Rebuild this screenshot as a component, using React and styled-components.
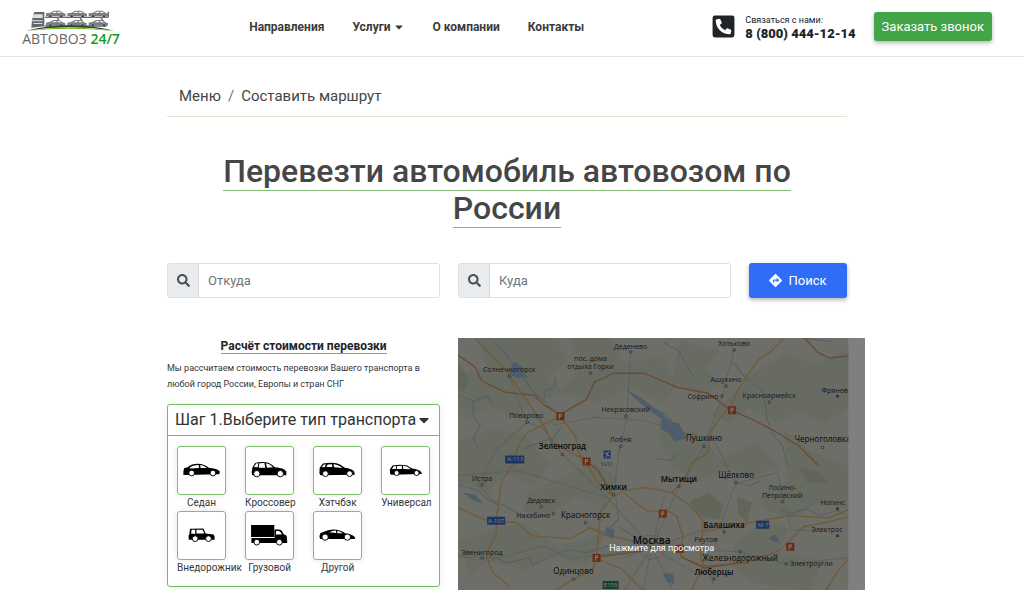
import React from 'react';
import styled, { createGlobalStyle } from 'styled-components';
import { FaCaretDown, FaDirections, FaPhoneSquareAlt, FaSearch } from 'react-icons/fa';

const GlobalStyle = createGlobalStyle`
  *,
  *::before,
  *::after {
    box-sizing: border-box;
  }

  body {
    margin: 0;
    background: #fff;
    color: #212529;
    font-family: Roboto, 'Liberation Sans', sans-serif;
    font-size: 15px;
  }

  button,
  input {
    font-family: inherit;
  }
`;

const Header = styled.header`
  display: flex;
  align-items: center;
  justify-content: space-between;
  padding: 4px 32px 7px 20px;
  border-bottom: 1px solid #e2e2e2;
`;

const Logo = styled.a`
  display: flex;
  flex-direction: column;
  align-items: center;
  width: 102px;
  padding: 3px 0 2px;
  color: #63676a;
  font-family: 'Open Sans', sans-serif;
  font-size: 14px;
  line-height: 16px;
  text-decoration: none;
  white-space: nowrap;

  b {
    color: #159a1c;
    font-weight: 600;
  }
`;

const Nav = styled.nav`
  display: flex;
  gap: 28px;
`;

const NavLink = styled.a`
  display: flex;
  align-items: center;
  gap: 2px;
  color: #3b3b3b;
  font-size: 12px;
  font-weight: 700;
  line-height: 18px;
  text-decoration: none;
`;

const Contacts = styled.div`
  display: flex;
  align-items: center;
  gap: 18px;
`;

const Phone = styled.a`
  display: flex;
  align-items: center;
  gap: 9px;
  color: #212529;
  font-size: 9px;
  line-height: 14px;
  text-decoration: none;

  strong {
    display: block;
    font-size: 13px;
    font-weight: 900;
  }
`;

const Button = styled.button`
  display: flex;
  align-items: center;
  justify-content: center;
  gap: 6px;
  padding: ${({ $wide }) => ($wide ? '8px 16px' : '5px 8px')};
  border: 0;
  border-radius: 3px;
  background: ${({ $color }) => $color};
  box-shadow: 0 2px 4px rgba(0, 0, 0, 0.3);
  color: #fff;
  font-size: 13px;
  line-height: 19px;
  white-space: nowrap;
  cursor: pointer;
`;

const Page = styled.main`
  max-width: 710px;
  margin: 0 auto;
  padding: 20px 20px 0 10px;
`;

const Breadcrumb = styled.nav`
  display: flex;
  gap: 7px;
  padding: 9px 12px;
  border-bottom: 1px solid #dfe6d0;
  color: #6c757d;
  font-size: 15px;
  line-height: 21px;

  a {
    color: #454545;
    text-decoration: none;
  }
`;

const Title = styled.h1`
  margin: 36px 0 0;
  color: #464646;
  font-size: 32px;
  font-weight: 500;
  line-height: 37px;
  text-align: center;

  span {
    border-bottom: 1px solid #86ba78;
  }
`;

const Search = styled.form`
  display: grid;
  grid-template-columns: 273fr 273fr 98fr;
  gap: 18px;
  margin-top: 36px;
`;

const Field = styled.label`
  display: flex;
  height: 35px;
  border: 1px solid #dcdfe3;
  border-radius: 3px;
  overflow: hidden;
`;

const FieldIcon = styled.span`
  display: flex;
  flex: none;
  align-items: center;
  justify-content: center;
  width: 31px;
  border-right: 1px solid #d5d9de;
  background: #e9ecef;
  color: #495057;
  font-size: 13px;
`;

const Input = styled.input`
  flex: 1;
  min-width: 0;
  padding: 0 9px;
  border: 0;
  color: #495057;
  font-size: 13px;

  &::placeholder {
    color: #6c757d;
  }
`;

const Columns = styled.div`
  display: grid;
  grid-template-columns: 273fr 407fr;
  gap: 18px;
  margin: 40px -18px 0 0;
`;

const Calculator = styled.section`
  padding-bottom: 4px;
`;

const Subtitle = styled.h2`
  margin: 0 0 6px;
  font-size: 12px;
  font-weight: 700;
  line-height: 16px;
  text-align: center;

  span {
    border-bottom: 1px solid #6cb355;
  }
`;

const Description = styled.p`
  margin: 0 0 12px;
  color: #33373b;
  font-size: 9px;
  line-height: 16px;
`;

const Step = styled.div`
  border: 1px solid #74bb64;
  border-radius: 3px;
  box-shadow: 0 0 8px rgba(0, 0, 0, 0.08);
`;

const StepHeader = styled.button`
  display: flex;
  align-items: center;
  justify-content: space-between;
  width: 100%;
  padding: 5px 7px;
  border: 0;
  border-bottom: 1px solid #74bb64;
  background: none;
  color: #2f3337;
  font-size: 16px;
  line-height: 20px;
  white-space: nowrap;
`;

const Vehicles = styled.div`
  display: grid;
  grid-template-columns: repeat(4, 49px);
  justify-content: space-between;
  padding: 10px 9px;
`;

const Vehicle = styled.button`
  width: 49px;
  padding: 0;
  border: 0;
  background: none;
  color: #33373b;
  font-size: 10px;
  line-height: 16px;
  cursor: pointer;
`;

const VehicleBox = styled.span`
  display: block;
  height: 49px;
  border: 1px solid #80bf70;
  border-radius: 3px;
  box-shadow: 0 0 6px rgba(0, 0, 0, 0.1);

  svg {
    display: block;
    width: 100%;
    height: 100%;
  }
`;

const VehicleName = styled.span`
  display: block;
  text-align: center;
  white-space: nowrap;
`;

const MapPanel = styled.div`
  display: grid;
  position: relative;
  overflow: hidden;

  svg {
    width: 100%;
    height: 100%;
  }
`;

const MapOverlay = styled.button`
  position: absolute;
  inset: 0;
  padding: 166px 0 0;
  border: 0;
  background: rgba(0, 0, 0, 0.5);
  color: #fff;
  font-size: 9px;
  cursor: pointer;
`;

const Wheels = ({ left, right, y, r = 9 }) => (
  <g fill="#fff" stroke="#000" strokeWidth="3">
    <circle cx={left} cy={y} r={r} />
    <circle cx={right} cy={y} r={r} />
  </g>
);

const vehicles = [
  {
    name: 'Седан',
    body: 'M17 76L19 66L30 63Q43 52 62 52Q82 52 97 64Q120 66 128 73L132 76L130 85L17 87Z',
    glass: 'M37 64Q46 56 65 56L66 65L38 67ZM70 56Q80 56 91 65L71 65Z',
    wheels: { left: 43, right: 110, y: 81 },
  },
  {
    name: 'Кроссовер',
    body: 'M18 78L20 64L28 50Q38 45 63 47Q76 48 91 63Q119 64 127 76V88L19 88Z',
    glass: 'M25 62L32 51L39 50L37 63ZM42 50L58 49L61 64L40 64ZM63 50Q75 51 85 63L66 64Z',
    wheels: { left: 34, right: 108, y: 83, r: 10 },
  },
  {
    name: 'Хэтчбэк',
    body: 'M17 82L18 64L28 51Q54 46 71 50Q83 53 97 64Q118 66 126 75L129 86L20 88Z',
    glass: 'M24 63L31 54L37 53L34 62ZM43 54L56 53L58 62L39 62ZM61 53Q75 53 90 65L64 63Z',
    wheels: { left: 36, right: 112, y: 83 },
  },
  {
    name: 'Универсал',
    body: 'M25 81L25 69L33 57Q59 53 79 57L95 67Q115 70 122 76L126 84L28 86Z',
    glass: 'M31 68L37 60L45 59L43 68ZM48 59L62 58L63 68L46 68ZM66 58Q78 58 91 69L67 68Z',
    wheels: { left: 46, right: 109, y: 81, r: 8 },
  },
  {
    name: 'Внедорожник',
    body: 'M33 72H35L38 52L80 51L87 67L112 70L115 75V86L34 86Z',
    glass: 'M41 67L43 55H54V68ZM58 55H77L83 67H58Z',
    wheels: { left: 54, right: 96, y: 83 },
  },
  {
    name: 'Грузовой',
    body: 'M16 40H89V78H16ZM17 81H90V54H104Q112 54 118 68L128 74L130 97H17Z',
    glass: 'M95 59H104Q110 62 113 70H94Z',
    wheels: { left: 34, right: 105, y: 94 },
  },
  {
    name: 'Другой',
    body: 'M17 75L20 66L35 60Q51 52 72 55Q86 57 100 67Q124 70 130 80L128 84L19 84Z',
    glass: 'M48 63Q56 57 69 57L70 65ZM73 58Q83 60 91 66L74 66Z',
    wheels: { left: 35, right: 105, y: 78, r: 10 },
  },
];

// name, label x and y, marker x and y, kind
const towns = [
  ['Деденево', 172, 11, 172, 14],
  ['пос. дома', 132, 23],
  ['отдыха Горки', 132, 31, 132, 35],
  ['Солнечногорск', 51, 34, 51, 38],
  ['Хотьково', 275, 8, 275, 12],
  ['Ашукино', 267, 44, 267, 48],
  ['Софрино', 244, 61, 263, 58],
  ['Красноармейск', 310, 60, 310, 64],
  ['Некрасовский', 167, 74, 167, 78],
  ['Поварово', 68, 80, 69, 84],
  ['Лобня', 162, 104, 162, 108],
  ['Зеленоград', 104, 111, 104, 116, 'big'],
  ['Пушкино', 245, 103, 245, 108, 'mid'],
  ['Черноголовка', 363, 104, 363, 109, 'mid'],
  ['Истра', 24, 142, 24, 146],
  ['Химки', 155, 151, 155, 156, 'big'],
  ['Мытищи', 220, 143, 220, 148, 'big'],
  ['Щёлково', 277, 139, 277, 144, 'mid'],
  ['Дедовск', 83, 164, 83, 168],
  ['Нахабино', 75, 179, 95, 175],
  ['Красногорск', 127, 179, 127, 184, 'mid'],
  ['Лосино-', 323, 151],
  ['Петровский', 323, 159, 323, 163],
  ['Балашиха', 265, 189, 265, 193, 'big'],
  ['Реутов', 247, 203],
  ['Москва', 193, 205, 193, 209, 'capital'],
  ['Железнодорожный', 281, 222, 281, 213, 'mid'],
  ['Электроугли', 352, 227, 327, 225],
  ['Люберцы', 255, 236, 255, 240, 'big'],
  ['Одинцово', 115, 235, 115, 240, 'mid'],
  ['Звенигород', 24, 216, 24, 219],
];

const sizes = { capital: 10, big: 8, mid: 8 };

function MapPicture() {
  return (
    <svg viewBox="0 0 407 252" preserveAspectRatio="xMinYMin slice" aria-hidden="true">
      <defs>
        <clipPath id="tiles">
          <path d="M0 0H389V252H0Z" />
        </clipPath>
      </defs>
      <path fill="#fff" d="M0 0H407V252H0Z" />
      <g clipPath="url(#tiles)">
        <path fill="#dcddd3" d="M0 0H389V252H0Z" />
        <g fill="#d0d6c4">
          <path d="M20 0H92L111 20L90 39L108 56L79 61L55 80L30 68L10 82L0 65V38L28 29Z" />
          <path d="M111 0H151L164 25L202 19L219 45L205 65L172 49L137 66L102 53L124 28Z" />
          <path d="M220 2L260 13L246 30L261 48L238 57L214 42Z" />
          <path d="M290 38L324 16L357 25L389 11V69L364 85L337 73L319 86L290 70L270 84L251 79Z" />
          <path d="M30 91L66 95L91 126L74 149L48 135L30 153L0 143V104Z" />
          <path d="M103 139L133 123L160 139L145 168L117 157L89 178L65 173L69 155Z" />
          <path d="M195 91L237 94L262 121L297 104L321 128L286 139L270 128L240 144L213 128Z" />
          <path d="M324 90L350 112L389 128V171L358 164L336 179L309 173L299 159L329 142Z" />
          <path d="M40 188L69 185L98 207L147 195L128 226L92 217L71 232L28 222L12 238L0 203Z" />
          <path d="M277 202L304 184L330 190L318 214L363 221L351 252L293 244L270 224Z" />
        </g>
        <g fill="#c4cdb3">
          <path d="M230 163L249 154L265 166L260 181L240 177Z" />
          <path d="M278 158L293 164L288 184L279 175Z" />
          <path d="M340 129L358 133L370 145L347 144Z" />
          <path d="M0 25L12 42L5 54L0 50Z" />
        </g>
        <g fill="none" stroke="#bdbfba" strokeWidth="1">
          <path d="M51 38L68 83L86 91L104 116L145 155L193 209M172 14L168 80L160 115L155 156M275 12L263 58L245 108L220 148L193 209" />
          <path d="M0 137L60 132L115 149L152 160M69 84L39 110L20 146L42 170M95 87L136 79L184 82L236 97M27 223L85 207L112 220L187 210M193 209L281 213L327 225L389 219" />
          <path d="M193 209L165 252M193 209L184 252M193 209L214 252M193 209L241 237M193 209L164 219M193 209L160 188M193 209L205 159M277 144L262 185L193 209M251 96L277 145L318 134L332 191L368 193" />
          <path d="M187 197H200L208 206L204 217L191 221L181 214L180 202Z" />
        </g>
        <g fill="none" stroke="#aabbcb" strokeWidth="1">
          <path d="M0 57L16 63L29 58L35 67M15 63V77L22 88L15 99L19 110M36 4L51 20L55 31L67 42L76 55L88 64L94 73M97 39V48L87 53L85 63" />
          <path d="M205 5L219 12L227 26L234 38M168 52L183 61L194 71L206 76L218 88M197 120L212 122L219 116M272 22L284 37L293 45L303 52L306 66L308 80L312 94L323 107L328 128" />
          <path d="M0 146L20 152L31 162L47 167L65 178M66 110L81 104L96 99L103 88M128 188L147 194L160 180L157 157M21 220L38 219L50 224L70 219L75 226L94 217L110 211L128 214L151 207" />
          <path d="M280 145L291 147L300 143M322 171L332 175L347 170L360 177L377 172L387 176M343 0L374 4M0 217L13 219L23 214" />
        </g>
        <g fill="#9fb9d2">
          <path d="M55 23L64 29L65 36L72 39L59 40L51 36Z" />
          <path d="M202 75L213 84L220 85L228 100L216 103L209 94L202 91Z" />
          <path d="M168 52L183 60L196 70L205 75L201 80L184 67Z" />
          <path d="M147 188L156 191L155 200L147 197ZM204 234L214 235L216 245L208 243Z" />
          <path d="M309 199L316 196L321 204L315 203ZM4 154L17 156L25 165L14 161Z" />
        </g>
        <g fill="none" stroke="#dcb878" strokeWidth="1.5" strokeLinejoin="round">
          <path d="M18 1L49 34L71 66L88 92L93 104L130 123M102 78L70 94L61 105L54 127L43 144L39 174L38 196L28 216L34 233L52 248" />
          <path d="M102 78L117 98L120 114L128 125L140 145L155 158L166 152L187 149L213 154L226 140L234 123L249 115L252 93L259 82L271 68L281 48L299 22L312 13L324 1" />
          <path d="M0 169L27 181L59 184L73 197L111 200L132 189L145 196L187 205M155 157L142 173L140 194L138 218L134 231L114 241L96 252" />
          <path d="M166 155L188 172L211 173L218 178L224 197L222 218L244 227L287 224L321 211L334 198L344 188L374 182L389 178M244 193L291 184L330 177L369 179L389 171" />
          <path d="M213 154L231 167L244 182L242 220L255 245M138 220L163 230L185 252M244 228L232 252M366 252L380 230L389 220" />
        </g>
        <g fill="none" stroke="#d49a6c" strokeWidth="1.5" strokeLinejoin="round">
          <path d="M0 17L17 29L24 43L47 54L76 57L86 67L102 76L128 61L136 44L155 35L185 35L202 42L218 49L249 55L272 72L293 81L316 93L340 108L359 127" />
          <path d="M128 123L139 131L154 156M139 218L164 215L184 212M222 218L245 229L285 223M345 0L358 14L370 20L389 18" />
        </g>
        <g fill="#e8e9e4" stroke="#484848">
          {towns.filter((town) => town[3]).map(([name, , , x, y]) => (
            <circle key={name} cx={x} cy={y} r="1.3" strokeWidth="0.7" />
          ))}
        </g>
        <g fill="#d3592b">
          {[[98, 74], [124, 119], [269, 68], [200, 171], [134, 215], [327, 204], [217, 206]].map(([x, y]) => (
            <path key={x} d={`M${x} ${y}h8v8h-8Z`} />
          ))}
        </g>
        <g fill="none" stroke="#eee" strokeWidth="1">
          {[[98, 74], [124, 119], [269, 68], [200, 171], [134, 215], [327, 204]].map(([x, y]) => (
            <path key={x} d={`M${x + 3} ${y + 7}v-5h2v2h-3`} />
          ))}
        </g>
        <path fill="#3968c2" d="M47 117H66V125H47ZM29 178H47V186H29ZM297 182H310V190H297ZM145 112H152V120H145Z" />
        <path fill="#328052" d="M144 242H160V250H144Z" />
        <path stroke="#fff" d="M146 114L151 118M150 113L147 119" />
        <g fill="#fff" fontFamily="Open Sans, sans-serif" fontSize="6" textAnchor="middle">
          <text x="57" y="123">А-113</text>
          <text x="38" y="184">А-107</text>
          <text x="304" y="188">М-7</text>
          <text x="152" y="248">E105</text>
        </g>
        <g fill="#333" fontFamily="Open Sans, Noto Sans, sans-serif" textAnchor="middle">
          {towns.map(([name, x, y, , , kind]) => (
            <text
              key={name}
              x={x}
              y={y}
              fontSize={sizes[kind] || 7}
              fontWeight={kind && kind !== 'mid' ? 600 : 500}
              fill={kind ? '#111' : '#333'}
            >
              {name}
            </text>
          ))}
          <text x="148" y="127" fontSize="6" fill="#4969a4">SVO</text>
          <text x="362" y="55" fontSize="7" textAnchor="start">Фрянов</text>
          <text x="361" y="166" fontSize="7" textAnchor="start">Ногинс</text>
          <text x="352" y="193" fontSize="7" textAnchor="start">Электрос</text>
          <circle cx="378" cy="58" r="1" fill="#eee" stroke="#444" />
          <circle cx="378" cy="170" r="1" fill="#eee" stroke="#444" />
          <circle cx="378" cy="197" r="1" fill="#eee" stroke="#444" />
        </g>
      </g>
    </svg>
  );
}

function LogoPicture() {
  return (
    <svg width="90" height="24" viewBox="0 0 270 72" aria-hidden="true">
      <path fill="#63676a" d="M25 15H55V58L16 62L18 40Z" />
      <path fill="#dfe2e2" d="M24 22H50V33H20ZM18 40H50V43H18ZM22 48H49V51H22Z" />
      <path fill="none" stroke="#63676a" strokeWidth="4" d="M57 31H247M56 57H242M94 31L106 56M162 31L175 56M224 31L242 57M247 14V31" />
      {[60, 124, 188].map((x) => (
        <g key={x} fill="#797d80">
          <path d={`M${x} 28v-9l13-2 10-6h18l11 7 7 3v7Z`} />
          <path d={`M${x} 55v-8l13-3 9-5h18l10 7 8 3v6Z`} />
          <path fill="#fff" d={`M${x + 17} 18l8-4h6v4Zm18 0v-4h5l7 4ZM${x + 17} 46l8-4h6v4Zm18 0v-4h5l7 4Z`} />
          <g fill="#3f4447" stroke="#e2e2e2" strokeWidth="1">
            <circle cx={x + 13} cy="28" r="5" />
            <circle cx={x + 46} cy="28" r="5" />
            <circle cx={x + 13} cy="55" r="5" />
            <circle cx={x + 46} cy="55" r="5" />
          </g>
        </g>
      ))}
      <path fill="#30452b" d="M1 71Q130 39 264 71Q130 51 1 71Z" />
      <path fill="#6cb525" d="M6 71Q130 51 264 72Q130 59 6 71Z" />
    </svg>
  );
}

function SearchField({ placeholder, name }) {
  return (
    <Field>
      <FieldIcon>
        <FaSearch />
      </FieldIcon>
      <Input type="text" name={name} placeholder={placeholder} aria-label={placeholder} />
    </Field>
  );
}

function VehicleOption({ name, body, glass, wheels }) {
  return (
    <Vehicle type="button">
      <VehicleBox>
        <svg viewBox="0 0 148 146" aria-hidden="true">
          <path d={body} />
          <path d={glass} fill="#fff" />
          <Wheels {...wheels} />
        </svg>
      </VehicleBox>
      <VehicleName>{name}</VehicleName>
    </Vehicle>
  );
}

function App() {
  return (
    <>
      <GlobalStyle />
      <Header>
        <Logo href="#">
          <LogoPicture />
          <span>
            АВТОВОЗ <b>24/7</b>
          </span>
        </Logo>
        <Nav>
          <NavLink href="#">Направления</NavLink>
          <NavLink href="#">
            Услуги <FaCaretDown />
          </NavLink>
          <NavLink href="#">О компании</NavLink>
          <NavLink href="#">Контакты</NavLink>
        </Nav>
        <Contacts>
          <Phone href="tel:88004441214">
            <FaPhoneSquareAlt size={25} />
            <span>
              Связаться с нами:
              <strong>8 (800) 444-12-14</strong>
            </span>
          </Phone>
          <Button type="button" $color="#43a547">
            Заказать звонок
          </Button>
        </Contacts>
      </Header>
      <Page>
        <Breadcrumb aria-label="Меню">
          <a href="#">Меню</a>
          <span>/</span>
          <a href="#">Составить маршрут</a>
        </Breadcrumb>
        <Title>
          <span>Перевезти автомобиль автовозом по России</span>
        </Title>
        <Search>
          <SearchField name="from" placeholder="Откуда" />
          <SearchField name="to" placeholder="Куда" />
          <Button type="button" $color="#2f6df6" $wide>
            <FaDirections /> Поиск
          </Button>
        </Search>
        <Columns>
          <Calculator>
            <Subtitle>
              <span>Расчёт стоимости перевозки</span>
            </Subtitle>
            <Description>
              Мы рассчитаем стоимость перевозки Вашего транспорта в любой город России, Европы и стран СНГ
            </Description>
            <Step>
              <StepHeader type="button">
                Шаг 1.Выберите тип транспорта <FaCaretDown />
              </StepHeader>
              <Vehicles>
                {vehicles.map((vehicle) => (
                  <VehicleOption key={vehicle.name} {...vehicle} />
                ))}
              </Vehicles>
            </Step>
          </Calculator>
          <MapPanel>
            <MapPicture />
            <MapOverlay type="button">Нажмите для просмотра</MapOverlay>
          </MapPanel>
        </Columns>
      </Page>
    </>
  );
}

export default App;
